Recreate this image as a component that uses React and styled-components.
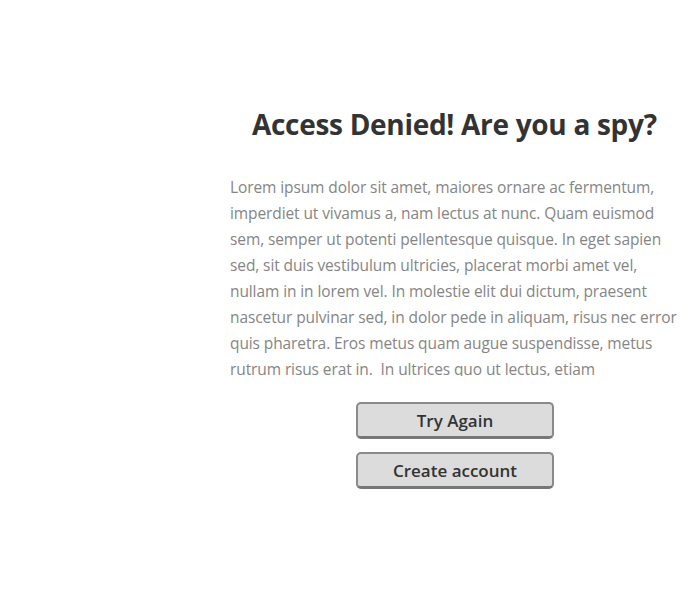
import React from 'react';
import styled, { createGlobalStyle } from 'styled-components';

const GlobalStyle = createGlobalStyle`
  html, body {
    margin: 0;
    padding: 0;
    background: #fff;
  }
  body {
    font-family: 'Open Sans', 'Noto Sans', sans-serif;
  }
`;

const Page = styled.div`
  display: flex;
  width: 700px;
  height: 600px;
  padding-top: 104px;
  box-sizing: border-box;
`;

const Aside = styled.div`
  width: 230px;
  flex-shrink: 0;
`;

const Content = styled.div`
  width: 460px;
  display: flex;
  flex-direction: column;
  align-items: flex-start;
`;

const Title = styled.h1`
  margin: 0 0 0 22px;
  font-size: 28px;
  font-weight: 700;
  line-height: 40px;
  color: #333;
  letter-spacing: -0.3px;
  white-space: nowrap;
`;

const Text = styled.p`
  margin: 30px 0 0;
  height: 202px;
  overflow: hidden;
  font-size: 15.5px;
  font-weight: 500;
  line-height: 26px;
  color: #858585;
  letter-spacing: -0.1px;
  white-space: pre;
  align-self: stretch;
`;

const Buttons = styled.div`
  margin: 26px 0 0 126px;
  display: flex;
  flex-direction: column;
  gap: 13px;
`;

const Button = styled.button`
  width: 198px;
  height: 37px;
  box-sizing: border-box;
  background: #dcdcdc;
  border: 2px solid #8a8a8a;
  border-bottom: 3px solid #777;
  border-radius: 5px;
  font-family: inherit;
  font-size: 17px;
  font-weight: 600;
  color: #333;
  cursor: pointer;
`;

const lines = [
  'Lorem ipsum dolor sit amet, maiores ornare ac fermentum,',
  'imperdiet ut vivamus a, nam lectus at nunc. Quam euismod',
  'sem, semper ut potenti pellentesque quisque. In eget sapien',
  'sed, sit duis vestibulum ultricies, placerat morbi amet vel,',
  'nullam in in lorem vel. In molestie elit dui dictum, praesent',
  'nascetur pulvinar sed, in dolor pede in aliquam, risus nec error',
  'quis pharetra. Eros metus quam augue suspendisse, metus',
  'rutrum risus erat in.  In ultrices quo ut lectus, etiam',
  'vestibulum urna a est, pretium luctus euismod nisl.',
];

const App = () => {
  return (
    <>
      <GlobalStyle />
      <Page>
        <Aside />
        <Content>
          <Title>Access Denied! Are you a spy?</Title>
          <Text>{lines.join('\n')}</Text>
          <Buttons>
            <Button>Try Again</Button>
            <Button>Create account</Button>
          </Buttons>
        </Content>
      </Page>
    </>
  );
};

export default App;
